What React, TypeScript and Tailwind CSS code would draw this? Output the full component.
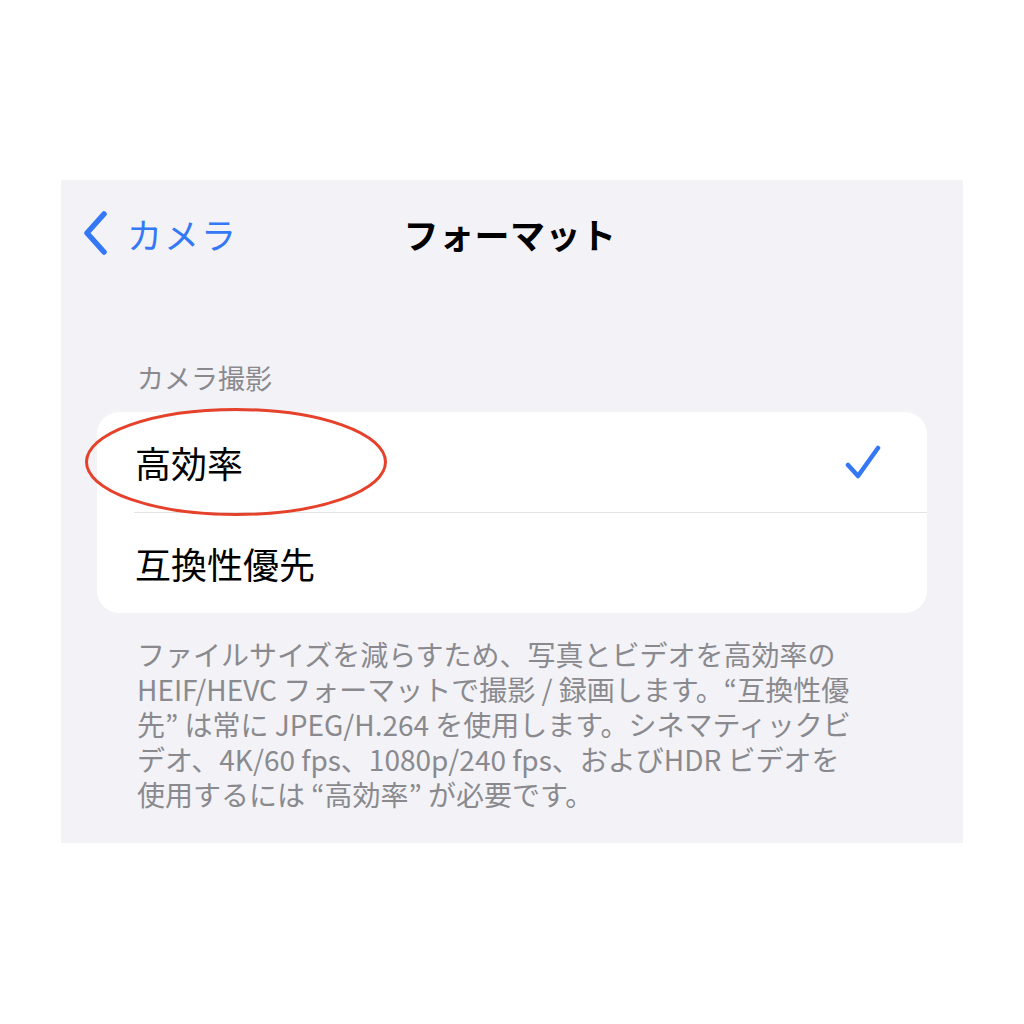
import { FC } from 'react';

const font = { fontFamily: '"Noto Sans CJK JP", "Noto Sans", sans-serif' };

const footerLines = [
  'ファイルサイズを減らすため、写真とビデオを高効率の',
  'HEIF/HEVC フォーマットで撮影 / 録画します。“互換性優',
  '先” は常に JPEG/H.264 を使用します。シネマティックビ',
  'デオ、4K/60 fps、1080p/240 fps、およびHDR ビデオを',
  '使用するには “高効率” が必要です。',
];

const App: FC = () => {
  return (
    <div
      className="w-[1024px] h-[1024px] bg-white pt-[180px] pl-[61px]"
      style={font}
    >
      <div className="w-[902px] h-[663px] bg-[#f2f2f7]">
        {/* nav bar */}
        <div className="relative h-[106px] flex items-center">
          <div className="flex items-center pl-[21px] text-[#3478f6]">
            <svg width="27" height="44" viewBox="0 0 27 44" fill="none">
              <path
                d="M22 3 L5 22 L22 41"
                stroke="currentColor"
                strokeWidth="5.5"
                strokeLinecap="round"
                strokeLinejoin="round"
              />
            </svg>
            <span className="ml-[18px] text-[35px] leading-none tracking-[2px]">
              カメラ
            </span>
          </div>
          <div className="absolute inset-0 flex items-center justify-center pointer-events-none">
            <span className="text-[35px] font-bold text-black leading-none tracking-[0.5px] -ml-[4px]">
              フォーマット
            </span>
          </div>
        </div>

        {/* section header */}
        <div className="pt-[78px] pl-[76px] text-[27px] leading-none text-[#8a8a8e]">
          カメラ撮影
        </div>

        {/* list card */}
        <div className="mt-[21px] mx-[36px] bg-white rounded-[22px]">
          <div className="relative h-[100px] flex items-center justify-between pl-[38px] pr-[46px]">
            <span className="text-[36px] leading-none text-black">高効率</span>
            <svg width="36" height="34" viewBox="0 0 36 34" fill="none">
              <path
                d="M3 20 L13 31 L33 3"
                stroke="#3478f6"
                strokeWidth="4.5"
                strokeLinecap="round"
                strokeLinejoin="round"
              />
            </svg>
            <svg
              className="absolute left-[-12px] top-[-4px] overflow-visible pointer-events-none"
              width="302"
              height="108"
              viewBox="0 0 302 108"
              fill="none"
            >
              <ellipse
                cx="151"
                cy="54"
                rx="149.5"
                ry="52.5"
                stroke="#e5412b"
                strokeWidth="3"
              />
            </svg>
          </div>
          <div className="ml-[37px] h-px bg-[#e3e3e6]" />
          <div className="h-[100px] flex items-center pl-[38px]">
            <span className="text-[36px] leading-none text-black">互換性優先</span>
          </div>
        </div>

        {/* footer */}
        <div className="mt-[24px] pl-[76px] text-[28px] leading-[35px] text-[#8a8a8e] whitespace-nowrap">
          {footerLines.map((line) => (
            <div key={line}>{line}</div>
          ))}
        </div>
      </div>
    </div>
  );
};

export default App;
